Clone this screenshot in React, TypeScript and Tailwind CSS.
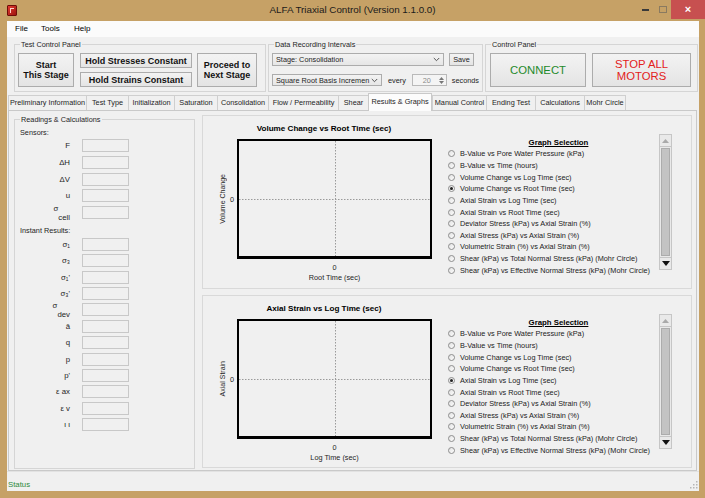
import React from "react";

const graphOptions = [
  "B-Value vs Pore Water Pressure (kPa)",
  "B-Value vs Time (hours)",
  "Volume Change vs Log Time (sec)",
  "Volume Change vs Root Time (sec)",
  "Axial Strain vs Log Time (sec)",
  "Axial Strain vs Root Time (sec)",
  "Deviator Stress (kPa) vs Axial Strain (%)",
  "Axial Stress (kPa) vs Axial Strain (%)",
  "Volumetric Strain (%) vs Axial Strain (%)",
  "Shear (kPa) vs Total Normal Stress (kPa) (Mohr Circle)",
  "Shear (kPa) vs Effective Normal Stress (kPa) (Mohr Circle)",
];

const tabs = [
  { label: "Preliminary Information", w: "w-[78px]" },
  { label: "Test Type", w: "w-[42px]" },
  { label: "Initialization", w: "w-[46px]" },
  { label: "Saturation", w: "w-[43px]" },
  { label: "Consolidation", w: "w-[51px]" },
  { label: "Flow / Permeability", w: "w-[70px]" },
  { label: "Shear", w: "w-[30px]" },
  { label: "Results & Graphs", w: "w-[64px]", active: true },
  { label: "Manual Control", w: "w-[54px]" },
  { label: "Ending Test", w: "w-[49px]" },
  { label: "Calculations", w: "w-[49px]" },
  { label: "Mohr Circle", w: "w-[42px]" },
];

const btn =
  "border border-[#acacac] bg-gradient-to-b from-[#f3f3f3] to-[#e4e4e4] flex items-center justify-center text-center";

function Chevron() {
  return (
    <svg width="7" height="5" viewBox="0 0 7 5" className="mr-[3px] shrink-0">
      <path d="M0.8 1 L3.5 3.7 L6.2 1" fill="none" stroke="#444" strokeWidth="0.9" />
    </svg>
  );
}

function Select({ text, className }: { text: string; className: string }) {
  return (
    <div className={`flex items-center border border-[#acacac] bg-gradient-to-b from-[#f3f3f3] to-[#e6e6e6] pl-[3px] ${className}`}>
      <span className="flex-1 truncate leading-[9px]">{text}</span>
      <Chevron />
    </div>
  );
}

function ReadingRow({ label }: { label: React.ReactNode }) {
  return (
    <div className="flex items-center h-[13px]">
      <span className="w-[55px] text-right leading-[9px] whitespace-nowrap text-[7.8px]">{label}</span>
      <span className="ml-[12px] w-[47px] h-[13px] border border-[#c8c8c8] bg-[#f0f0f0]" />
    </div>
  );
}

function Sub({ base, sub }: { base: string; sub: string }) {
  return (
    <>
      <span className="align-[4px]">{base}</span>
      <span className="align-[-5px]">{sub}</span>
    </>
  );
}

function ScrollBar() {
  return (
    <div className="w-[13px] self-stretch my-[18px] mr-[19px] border border-[#c6c6c6] bg-[#e9e9e9] flex flex-col">
      <div className="h-[12px] flex items-center justify-center border-b border-[#c6c6c6]">
        <svg width="7" height="4" viewBox="0 0 7 4">
          <path d="M0 4 L3.5 0 L7 4 Z" fill="#a9a9a9" />
        </svg>
      </div>
      <div className="flex-1 mx-[1px] my-[1px] bg-[#c3c3c3] border border-[#acacac]" />
      <div className="h-[12px] flex items-center justify-center border-t border-[#c6c6c6]">
        <svg width="8" height="5" viewBox="0 0 8 5">
          <path d="M0 0 L8 0 L4 5 Z" fill="#111" />
        </svg>
      </div>
    </div>
  );
}

function Radio({ checked }: { checked: boolean }) {
  return (
    <span className="w-[7px] h-[7px] rounded-full border border-[#8d8d8d] bg-gradient-to-br from-[#e2e2e2] to-[#fdfdfd] flex items-center justify-center shrink-0">
      {checked && <span className="w-[3px] h-[3px] rounded-full bg-[#222]" />}
    </span>
  );
}

function GraphPanel({
  title,
  yLabel,
  xLabel,
  selected,
  height,
}: {
  title: string;
  yLabel: string;
  xLabel: string;
  selected: number;
  height: string;
}) {
  return (
    <div className={`${height} border border-[#d9d9d9] flex`}>
      {/* chart */}
      <div className="w-[238px] flex flex-col">
        <div className="h-[23px] pt-[8px] leading-[9px] pl-[4px] text-center font-bold text-[8.1px] text-black whitespace-nowrap">
          {title}
        </div>
        <div className="flex h-[120px]">
          <div className="w-[24px] flex items-center justify-end">
            <span className="[writing-mode:vertical-rl] rotate-180 leading-[9px] whitespace-nowrap text-[7px]">
              {yLabel}
            </span>
          </div>
          <div className="w-[10px] flex items-center justify-end pr-[3px] leading-[9px]">0</div>
          <div className="w-[195px] h-[120px] border-2 border-b-[3px] border-black">
            <svg width="100%" height="100%" viewBox="0 0 191 115" preserveAspectRatio="none">
              <line x1="96.5" y1="0" x2="96.5" y2="115" stroke="#9a9a9a" strokeWidth="1" strokeDasharray="1.5 1.5" />
              <line x1="0" y1="58.5" x2="191" y2="58.5" stroke="#9a9a9a" strokeWidth="1" strokeDasharray="1.5 1.5" />
            </svg>
          </div>
        </div>
        <div className="pl-[34px] w-[229px] text-center leading-[9px] mt-[4px]">0</div>
        <div className="pl-[34px] w-[229px] text-center leading-[9px] mt-[1px] whitespace-nowrap">{xLabel}</div>
      </div>
      {/* selection */}
      <div className="flex-1 flex flex-col pt-[22px]">
        <div className="pl-[17px] text-center font-bold underline text-[7.8px] leading-[9px] text-black">
          Graph Selection
        </div>
        <div className="flex flex-col pl-[7px] mt-[1px]">
          {graphOptions.map((opt, i) => (
            <div key={i} className="h-[11.65px] flex items-center">
              <Radio checked={i === selected} />
              <span className="ml-[5px] leading-[9px] whitespace-nowrap text-[#222]">{opt}</span>
            </div>
          ))}
        </div>
      </div>
      <ScrollBar />
    </div>
  );
}

export default function App() {
  return (
    <div className="w-[705px] h-[498px] bg-[#c6a166] flex flex-col overflow-hidden font-['Liberation_Sans',Arial,sans-serif] text-[7.3px] text-[#1e1e1e]">
      {/* title bar */}
      <div className="h-[21px] flex items-start shrink-0">
        <div className="w-[110px] h-[21px] flex items-center pl-[7px]">
          <span className="w-[10px] h-[11px] rounded-[1px] bg-gradient-to-br from-[#e43a30] to-[#9c1410] border border-[#6e0c08] flex items-center justify-center">
            <span className="w-[4px] h-[5px] border-l border-t border-[#ffd0c8]" />
          </span>
        </div>
        <div className="flex-1 h-[21px] flex items-center justify-center text-[9.8px] text-[#1a1a1a] whitespace-nowrap">
          ALFA Triaxial Control (Version 1.1.0.0)
        </div>
        <div className="w-[110px] flex justify-end items-start">
          <div className="w-[17px] h-[19px] flex items-center justify-center">
            <span className="w-[7px] h-[2px] bg-[#3a3a3a]" />
          </div>
          <div className="w-[17px] h-[19px] flex items-center justify-center">
            <span className="w-[8px] h-[7px] border border-[#8a7a60]" />
          </div>
          <div className="w-[34px] h-[19px] bg-[#c75050] flex items-center justify-center text-white text-[11px] font-bold">
            ×
          </div>
        </div>
      </div>

      {/* window body */}
      <div className="flex-1 ml-[7px] mr-[6px] mb-[7px] bg-[#f0f0f0] flex flex-col">
        {/* menu */}
        <div className="h-[16px] bg-[#fbfbfb] flex items-center pl-[8px] text-[8px] text-black shrink-0">
          <span className="w-[26px]">File</span>
          <span className="w-[33px]">Tools</span>
          <span>Help</span>
        </div>

        {/* toolbar groups */}
        <div className="h-[56px] flex items-start shrink-0">
          <fieldset className="ml-[7px] mt-[3px] w-[252px] h-[52px] border border-[#d5d5d5] px-[3px] pt-[4px]">
            <legend className="ml-[2px] px-[1px] leading-[9px]">Test Control Panel</legend>
            <div className="flex font-bold text-[9px] text-[#111] leading-[10px]">
              <div className={`${btn} w-[56px] h-[34px]`}>
                Start
                <br />
                This Stage
              </div>
              <div className="ml-[6px] w-[112px] flex flex-col gap-[4px]">
                <div className={`${btn} h-[15px] whitespace-nowrap`}>Hold Stresses Constant</div>
                <div className={`${btn} h-[15px] whitespace-nowrap`}>Hold Strains Constant</div>
              </div>
              <div className={`${btn} ml-[5px] w-[60px] h-[34px]`}>
                Proceed to
                <br />
                Next Stage
              </div>
            </div>
          </fieldset>

          <fieldset className="ml-[2px] mt-[3px] w-[214px] h-[52px] border border-[#d5d5d5] px-[3px] pt-[4px]">
            <legend className="ml-[2px] px-[1px] leading-[9px]">Data Recording Intervals</legend>
            <div className="flex items-center">
              <Select text="Stage: Consolidation" className="w-[172px] h-[13px]" />
              <div className={`${btn} ml-[5px] w-[25px] h-[13px] leading-[9px]`}>Save</div>
            </div>
            <div className="flex items-center mt-[8px]">
              <Select text="Square Root Basis Incremen" className="w-[110px] h-[12px]" />
              <span className="ml-[6px] leading-[9px]">every</span>
              <div className="ml-[6px] w-[35px] h-[12px] border border-[#b9b9b9] bg-[#f4f4f4] flex items-center">
                <span className="flex-1 text-center pl-[4px] text-[#8a8a8a] leading-[9px]">20</span>
                <div className="w-[9px] h-full flex flex-col items-center justify-center gap-[1px]">
                  <svg width="5" height="3" viewBox="0 0 5 3">
                    <path d="M0 3 L2.5 0 L5 3 Z" fill="#777" />
                  </svg>
                  <svg width="5" height="3" viewBox="0 0 5 3">
                    <path d="M0 0 L5 0 L2.5 3 Z" fill="#777" />
                  </svg>
                </div>
              </div>
              <span className="ml-[5px] leading-[9px]">seconds</span>
            </div>
          </fieldset>

          <fieldset className="ml-[2px] mt-[3px] w-[213px] h-[52px] border border-[#d5d5d5] px-[3px] pt-[4px]">
            <legend className="ml-[2px] px-[1px] leading-[9px]">Control Panel</legend>
            <div className="flex text-[11.3px] leading-[12px]">
              <div className={`${btn} ml-[1px] w-[96px] h-[34px] text-[#1f8a2a]`}>CONNECT</div>
              <div className={`${btn} ml-[6px] w-[99px] h-[34px] text-[#e3211b]`}>
                STOP ALL
                <br />
                MOTORS
              </div>
            </div>
          </fieldset>
        </div>

        {/* tabs */}
        <div className="h-[17px] flex items-end pl-[1px] shrink-0">
          {tabs.map((t) =>
            t.active ? (
              <div
                key={t.label}
                className={`${t.w} h-[18px] -mb-px bg-[#fcfcfc] border-x border-t border-[#c9c9c9] flex items-center justify-center whitespace-nowrap relative z-10`}
              >
                {t.label}
              </div>
            ) : (
              <div
                key={t.label}
                className={`${t.w} h-[15px] bg-[#f0f0f0] border-l border-t border-[#cfcfcf] last:border-r flex items-center justify-center whitespace-nowrap`}
              >
                {t.label}
              </div>
            )
          )}
        </div>

        {/* tab page */}
        <div className="flex-1 ml-[1px] mr-[2px] border border-[#c9c9c9] bg-[#f0f0f0] flex items-start">
          <fieldset className="ml-[5px] mt-[3.5px] w-[181px] h-[354px] border border-[#d5d5d5] bg-[#f0f0f0]">
            <legend className="ml-[5px] px-[1px] leading-[9px]">Readings &amp; Calculations</legend>
            <div className="pl-[5px] mt-[4px] leading-[9px]">Sensors:</div>
            <div className="flex flex-col gap-[3.75px] mt-[2.5px]">
              <ReadingRow label="F" />
              <ReadingRow label="ΔH" />
              <ReadingRow label="ΔV" />
              <ReadingRow label="u" />
              <ReadingRow label={<Sub base="σ" sub="cell" />} />
            </div>
            <div className="pl-[5px] mt-[6.5px] leading-[9px]">Instant Results:</div>
            <div className="flex flex-col gap-[3.36px] mt-[3.5px]">
              <ReadingRow label="σ₁" />
              <ReadingRow label="σ₃" />
              <ReadingRow label="σ₁'" />
              <ReadingRow label="σ₃'" />
              <ReadingRow label={<Sub base="σ" sub="dev" />} />
              <ReadingRow label="ā" />
              <ReadingRow label="q" />
              <ReadingRow label="p" />
              <ReadingRow label="p'" />
              <ReadingRow label="ε ax" />
              <ReadingRow label="ε v" />
              <ReadingRow label="ι ι" />
            </div>
          </fieldset>

          <div className="ml-[7px] mt-[4px] w-[490px] flex flex-col gap-[6px]">
            <GraphPanel
              title="Volume Change vs Root Time (sec)"
              yLabel="Volume Change"
              xLabel="Root Time (sec)"
              selected={3}
              height="h-[174px]"
            />
            <GraphPanel
              title="Axial Strain vs Log Time (sec)"
              yLabel="Axial Strain"
              xLabel="Log Time (sec)"
              selected={4}
              height="h-[173px]"
            />
          </div>
        </div>

        {/* status bar */}
        <div className="h-[20px] shrink-0 border-t border-[#e2e2e2] flex items-end pb-[2px] pl-[1px] justify-between">
          <span className="text-[7.8px] leading-[9px] text-[#2f8a3c]">Status</span>
          <svg width="8" height="8" viewBox="0 0 8 8" className="mr-[1px]">
            <rect x="6" y="0" width="1.5" height="1.5" fill="#b5b5b5" />
            <rect x="3" y="3" width="1.5" height="1.5" fill="#b5b5b5" />
            <rect x="6" y="3" width="1.5" height="1.5" fill="#b5b5b5" />
            <rect x="0" y="6" width="1.5" height="1.5" fill="#b5b5b5" />
            <rect x="3" y="6" width="1.5" height="1.5" fill="#b5b5b5" />
            <rect x="6" y="6" width="1.5" height="1.5" fill="#b5b5b5" />
          </svg>
        </div>
      </div>
    </div>
  );
}
